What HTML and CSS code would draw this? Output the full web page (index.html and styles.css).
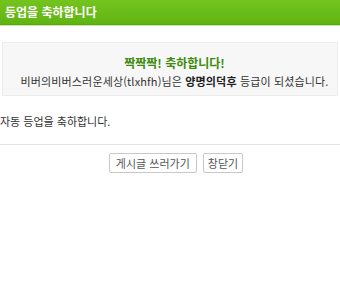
FILE: index.html
```html
<!DOCTYPE html>
<html lang="ko">
<head>
    <meta charset="UTF-8">
    <title>등업을 축하합니다</title>
    <link rel="stylesheet" href="styles.css">
</head>
<body>
    <div class="header">등업을 축하합니다</div>
    <div class="content">
        <div class="notice">
            <p class="clap">짝짝짝! 축하합니다!</p>
            <p class="msg">비버의비버스러운세상(tlxhfh)님은 <b>양명의덕후</b> 등급이 되셨습니다.</p>
        </div>
        <p class="auto">자동 등업을 축하합니다.</p>
        <div class="buttons">
            <button>게시글 쓰러가기</button>
            <button>창닫기</button>
        </div>
    </div>
</body>
</html>
```

FILE: styles.css
```css
body {
    margin: 0;
    font-family: "Noto Sans CJK KR", "Noto Sans", sans-serif;
    font-size: 11px;
    color: #333;
    background: #fff;
}
p {
    margin: 0;
}
.header {
    height: 24px;
    line-height: 23px;
    padding-left: 5px;
    color: #fff;
    font-size: 12px;
    font-weight: bold;
    background: linear-gradient(#74c41f, #60b412);
    border-bottom: 1px solid #5aa711;
    box-shadow: 0 1px 0 #c9e8ad;
}
.content {
    padding-top: 17px;
}
.notice {
    margin: 0 2px;
    padding: 10px 0 4px 9px;
    background: #f7f7f7;
    border: 1px solid #ededed;
    text-align: center;
}
.clap {
    color: #3d8a0c;
    font-size: 12px;
    font-weight: bold;
    line-height: 19px;
}
.msg {
    line-height: 19px;
    letter-spacing: 0.15px;
}
.msg b {
    color: #222;
}
.auto {
    padding: 16px 0 14px;
    line-height: 18px;
    border-bottom: 1px solid #e3e3e3;
}
.buttons {
    padding: 8px 0 0 12px;
    display: flex;
    justify-content: center;
    gap: 6px;
}
button {
    height: 20px;
    padding: 0 6px;
    font-family: inherit;
    font-size: 11px;
    color: #555;
    background: #fff;
    border: 1px solid #c8c8c8;
    border-radius: 2px;
}
button + button {
    padding: 0 4px;
}
```
